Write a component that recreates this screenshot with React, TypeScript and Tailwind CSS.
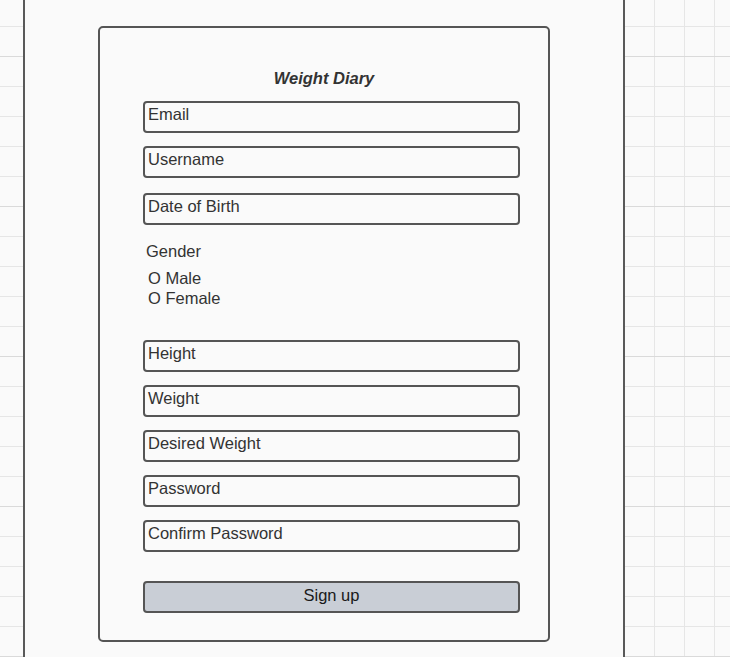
const fields1 = ["Email", "Username"];
const fields2 = ["Height", "Weight", "Desired Weight", "Password", "Confirm Password"];

function Field({ label, className = "" }: { label: string; className?: string }) {
  return (
    <div
      className={`w-[377px] h-[32px] border-2 border-[#555555] rounded-[4px] bg-[#fafafa] pl-[3px] pt-[2px] text-[16.5px] leading-[19px] text-[#333333] ${className}`}
    >
      {label}
    </div>
  );
}

export default function App() {
  return (
    <div
      className="w-full h-[657px] overflow-hidden flex pl-[23px] bg-[#fafafa] [background-image:linear-gradient(to_bottom,#dadada_1px,transparent_1px),linear-gradient(to_right,#e6e6e6_1px,transparent_1px),linear-gradient(to_bottom,#e6e6e6_1px,transparent_1px)] [background-size:150px_150px,30px_30px,30px_30px] [background-position:0_56px,24px_0,0_26px]"
      style={{ fontFamily: '"Liberation Sans", Arial, sans-serif' }}
    >
      <div className="w-[602px] h-full shrink-0 border-x-2 border-[#595959] bg-[#fafafa] pt-[26px] pl-[73px]">
        <div className="w-[452px] h-[616px] border-2 border-[#555555] rounded-[5px] bg-[#fafafa] pt-[41px] pl-[43px]">
          <h1 className="w-[362px] text-center text-[16.5px] leading-[19px] font-bold italic text-[#333333]">
            Weight Diary
          </h1>

          <div className="flex flex-col gap-[13px] mt-[13px]">
            {fields1.map((f) => (
              <Field key={f} label={f} />
            ))}
          </div>
          <Field label="Date of Birth" className="mt-[15px]" />

          <div className="mt-[17px] ml-[3px] text-[16.5px] leading-[18px] text-[#333333]">Gender</div>
          <div className="mt-[8px] ml-[5px] text-[16.5px] leading-[20px] text-[#333333]">
            <div>O Male</div>
            <div>O Female</div>
          </div>

          <div className="flex flex-col gap-[13px] mt-[32px]">
            {fields2.map((f) => (
              <Field key={f} label={f} />
            ))}
          </div>

          <button className="mt-[29px] w-[377px] h-[32px] border-2 border-[#555555] rounded-[4px] bg-[#c9ced6] pb-[3px] text-[16.5px] leading-[19px] text-[#1a1a1a] text-center">
            Sign up
          </button>
        </div>
      </div>
    </div>
  );
}
